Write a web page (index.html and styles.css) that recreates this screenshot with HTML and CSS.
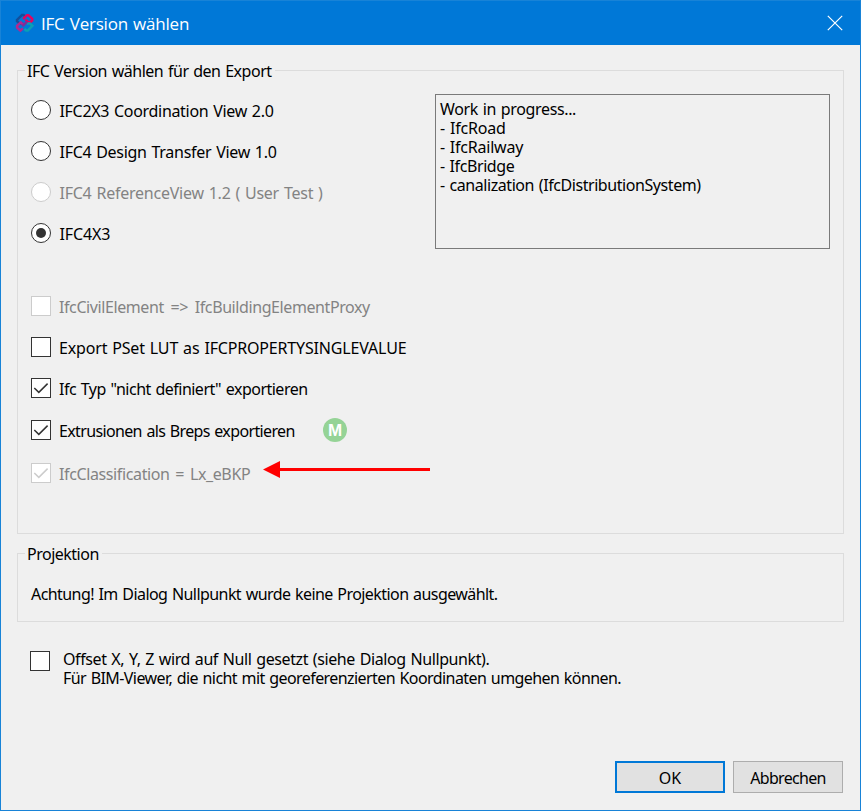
FILE: index.html
```html
<!DOCTYPE html>
<html lang="de">
<head>
<meta charset="utf-8">
<title>IFC Version wählen</title>
<link rel="stylesheet" href="styles.css">
</head>
<body>
<div class="window">
  <header class="titlebar">
    <svg class="logo" width="20" height="20" viewBox="0 0 20 20" fill="none" stroke-width="2.5">
      <path stroke="#124f9c" d="M10.4 3.6 L8.6 1.9 L7 1.9 L2 6.9 L2 8.3 L4.4 10.4 L8 10.4"/>
      <path stroke="#e4045f" d="M8.2 6 L12 2.2 L13.4 2.2 L17.2 5.8 L17.2 7.4 L14.2 10.2 L10.6 6.6"/>
      <path stroke="#b0288f" d="M9.2 12.6 L5.8 9.4 L2.1 12.9 L2.1 14.6 L5.4 17.5 L8 15.4"/>
      <path stroke="#0aa0b4" d="M11.8 10.4 L15 10.4 L17.4 12.8 L12.8 17.5 L11.2 17.5 L9.4 15.8"/>
      <path stroke="#7a2f9a" d="M7.4 13.2 L12 8.6"/>
    </svg>
    <h1 class="title">IFC Version wählen</h1>
    <svg class="close" width="16" height="16" viewBox="0 0 16 16" stroke="#fff" stroke-width="1.2"><path d="M.8 .8 L15.2 15.2 M15.2 .8 L.8 15.2"/></svg>
  </header>
  <main class="content">
    <section class="group export">
      <h2 class="legend"><span class="t-legend">IFC Version wählen für den Export</span></h2>
      <div class="columns">
        <div class="radios">
          <label class="option"><i class="radio"></i><span class="t-ifc2">IFC2X3 Coordination View 2.0</span></label>
          <label class="option"><i class="radio"></i><span class="t-design">IFC4 Design Transfer View 1.0</span></label>
          <label class="option disabled"><i class="radio"></i><span class="t-ref">IFC4 ReferenceView 1.2 ( User Test )</span></label>
          <label class="option"><i class="radio selected"></i><span class="t-ifc4">IFC4X3</span></label>
        </div>
        <div class="notes">
          <p class="t-work">Work in progress...</p>
          <p class="t-road">- IfcRoad</p>
          <p class="t-rail">- IfcRailway</p>
          <p class="t-bridge">- IfcBridge</p>
          <p class="t-canal">- canalization (IfcDistributionSystem)</p>
        </div>
      </div>
      <div class="checks">
        <label class="option disabled"><i class="box"></i><span class="t-civil">IfcCivilElement =&gt; IfcBuildingElementProxy</span></label>
        <label class="option"><i class="box"></i><span class="t-pset">Export PSet LUT as IFCPROPERTYSINGLEVALUE</span></label>
        <label class="option"><i class="box"><svg width="18" height="18" viewBox="0 0 18 18"><path d="M2.3 9 L6.8 13.4 L15.6 4.6"/></svg></i><span class="t-typ">Ifc Typ "nicht definiert" exportieren</span></label>
        <div class="option breps"><i class="box"><svg width="18" height="18" viewBox="0 0 18 18"><path d="M2.3 9 L6.8 13.4 L15.6 4.6"/></svg></i><span class="t-extr">Extrusionen als Breps exportieren</span><b class="badge">M</b></div>
        <div class="option disabled classification"><i class="box"><svg width="18" height="18" viewBox="0 0 18 18"><path d="M2.3 9 L6.8 13.4 L15.6 4.6"/></svg></i><span class="t-class">IfcClassification = Lx_eBKP</span>
          <svg class="arrow" width="167" height="17" viewBox="0 0 167 17" fill="#f00"><path d="M0 8.5 L17 0 V7 H167 V10 H17 V17 Z"/></svg></div>
      </div>
    </section>
    <section class="group projection">
      <h2 class="legend"><span class="t-proj">Projektion</span></h2>
      <p class="message">Achtung! Im Dialog Nullpunkt wurde keine Projektion ausgewählt.</p>
    </section>
    <label class="offset"><i class="box"></i>
      <span class="lines"><span class="t-offset">Offset X, Y, Z wird auf Null gesetzt (siehe Dialog Nullpunkt).</span><span class="t-bim">Für BIM-Viewer, die nicht mit georeferenzierten Koordinaten umgehen können.</span></span>
    </label>
    <footer class="actions">
      <button class="button primary">OK</button>
      <button class="button cancel">Abbrechen</button>
    </footer>
  </main>
</div>
</body>
</html>
```
FILE: styles.css
```css
* { box-sizing: border-box; }
body { margin: 0; font: 16px/20px "Noto Sans", sans-serif; word-spacing: 1px; color: #000; }
h1, h2, p { margin: 0; font: inherit; }
.window { display: flex; flex-direction: column; width: 861px; height: 811px; border: 1px solid #1883d7; background: #f0f0f0; white-space: nowrap; }
.titlebar { display: flex; align-items: center; height: 44px; padding: 0 17px 0 14px; background: #0078d7; color: #fff; }
.logo { margin-top: 0; }
.title { flex: 1; margin: 1px 0 0 6px; font: 17px/24px "Open Sans", sans-serif; letter-spacing: -.22px; }
.close { margin-top: -1px; }
.content { display: flex; flex-direction: column; flex: 1; padding: 25px 16px 17px; }

.group { border: 1px solid #dcdcdc; }
.export { height: 464px; }
.projection { height: 69px; margin-top: 19px; }
.legend { width: max-content; height: 20px; margin: -10px 0 0 7px; padding: 0 3px 0 2px; background: #f0f0f0; }
.columns { display: flex; justify-content: space-between; height: 190px; margin-top: 13px; padding: 0 13px; }
.radios { display: flex; flex-direction: column; gap: 21px; padding-top: 6px; }
.notes { width: 395px; height: 155px; padding: 5px 4px; border: 1px solid #7a7a7a; line-height: 19px; }
.checks { display: flex; flex-direction: column; gap: 21px; padding: 12px 13px 0; }

.option { display: flex; align-items: center; height: 20px; }
.option > span { margin: 1px 0 -1px 8px; }
.radios .option > span { margin-left: 8.5px; }
.disabled { color: #838383; }
.radio { display: grid; place-items: center; width: 20px; height: 20px; border: 1px solid #333; border-radius: 50%; background: #fff; }
.selected::after { content: ""; width: 10px; height: 10px; border-radius: 50%; background: #333; }
.box { flex: none; width: 20px; height: 20px; border: 1px solid #333; background: #fff; }
.box svg { display: block; fill: none; stroke: #333; stroke-width: 1.5; }
.disabled .radio, .disabled .box { border-color: #ccc; }
.disabled .box svg { stroke: #ccc; }
.breps { margin-top: 1px; }
.classification { margin-top: 2px; }
.breps > span { width: 236px; }
.classification > span { width: 192px; }
.badge { width: 24px; height: 24px; margin-left: 28px; border-radius: 50%; background: #95d396; color: #fff; font: bold 17px/25px "Liberation Sans", sans-serif; text-align: center; }
.arrow { margin: -7px 0 0 12px; }

.message { margin: 20px 0 0 13px; letter-spacing: -.57px; }
.offset { display: flex; margin: 27px 0 0 13px; }
.offset .box { margin-top: 2px; }
.lines { display: flex; flex-direction: column; margin: 1px 0 0 13px; line-height: 19px; }
.actions { display: flex; justify-content: flex-end; gap: 8px; margin: auto 1px 0 0; }
.button { width: 110px; height: 32px; padding: 2px 0 0; border: 1px solid #adadad; background: #e1e1e1; color: #000; font: inherit; }
.primary { border: 2px solid #0078d7; }

/* Per-string tracking */
.t-legend { letter-spacing: -.48px; }
.t-ifc2 { letter-spacing: -.31px; }
.t-design { letter-spacing: -.29px; }
.t-ref { letter-spacing: -.24px; }
.t-ifc4 { letter-spacing: -.1px; }
.t-work { letter-spacing: -.36px; }
.t-road { letter-spacing: -.19px; }
.t-rail { letter-spacing: -.23px; }
.t-bridge { letter-spacing: -.4px; }
.t-canal { letter-spacing: -.43px; }
.t-civil { letter-spacing: -.41px; word-spacing: 3px; }
.t-pset { letter-spacing: -.17px; }
.t-typ { letter-spacing: -.51px; }
.t-extr { letter-spacing: -.64px; }
.t-class { letter-spacing: -.38px; word-spacing: 2px; }
.t-proj { letter-spacing: -.5px; }
.t-offset { letter-spacing: -.4px; }
.t-bim { letter-spacing: -.58px; }
.cancel { letter-spacing: -.69px; }
```
